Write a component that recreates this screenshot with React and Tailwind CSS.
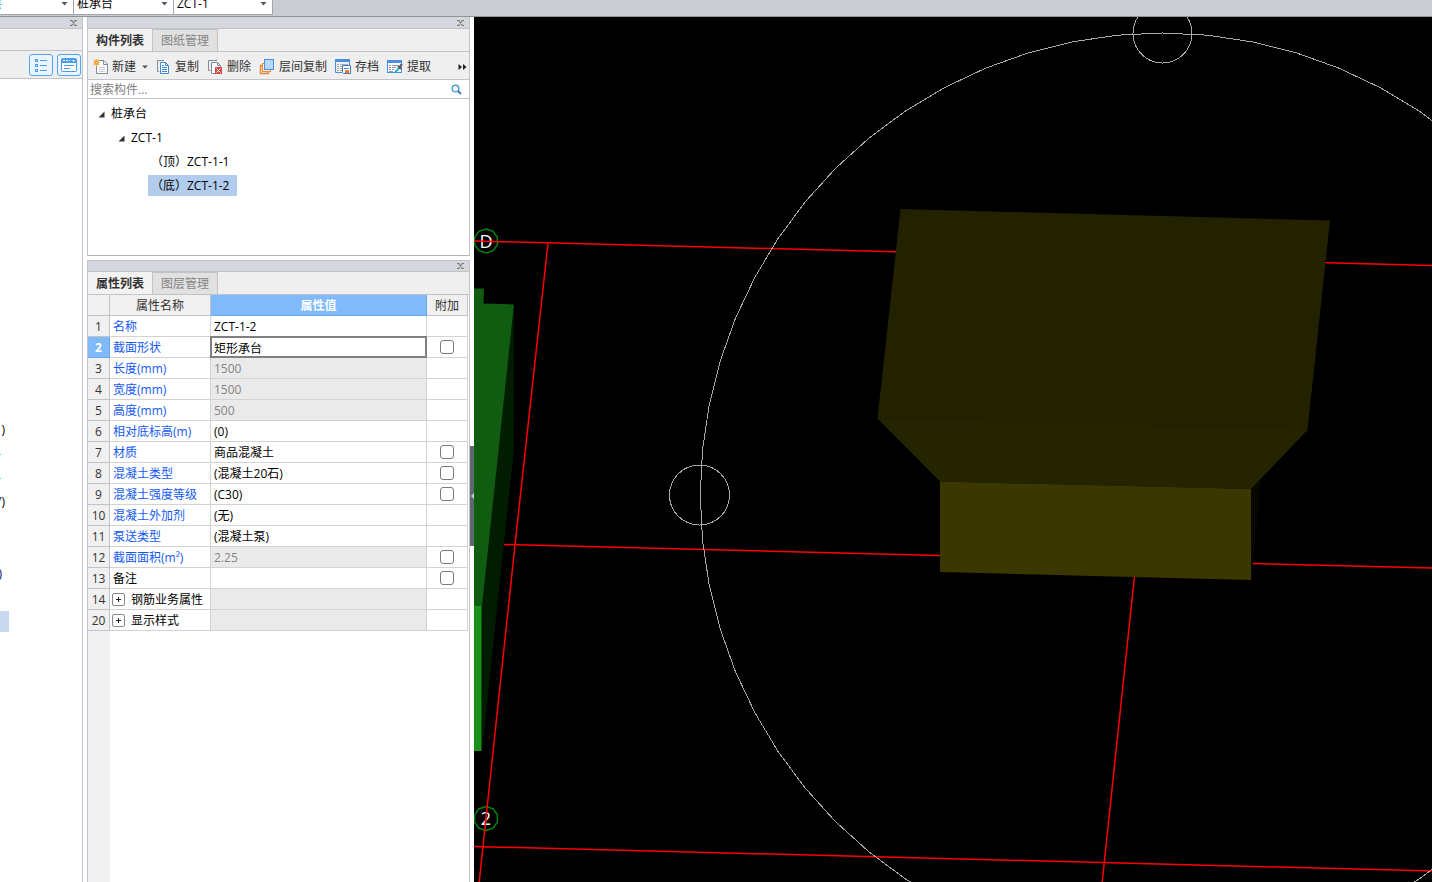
import React from 'react';

const rows = [
  { n: 1, name: '名称', value: 'ZCT-1-2' },
  { n: 2, name: '截面形状', value: '矩形承台', check: true, active: true },
  { n: 3, name: '长度(mm)', value: '1500', locked: true },
  { n: 4, name: '宽度(mm)', value: '1500', locked: true },
  { n: 5, name: '高度(mm)', value: '500', locked: true },
  { n: 6, name: '相对底标高(m)', value: '(0)' },
  { n: 7, name: '材质', value: '商品混凝土', check: true },
  { n: 8, name: '混凝土类型', value: '(混凝土20石)', check: true },
  { n: 9, name: '混凝土强度等级', value: '(C30)', check: true },
  { n: 10, name: '混凝土外加剂', value: '(无)' },
  { n: 11, name: '泵送类型', value: '(混凝土泵)' },
  { n: 12, name: '截面面积(m²)', value: '2.25', check: true, locked: true },
  { n: 13, name: '备注', value: '', check: true, plain: true },
  { n: 14, name: '钢筋业务属性', value: '', locked: true, group: true },
  { n: 20, name: '显示样式', value: '', locked: true, group: true },
];

function Combo({ label, value, width, text }) {
  return (
    <div className={`relative h-[22px] shrink-0 border-b border-[#a3a7ac] bg-white ${width}`}>
      <select aria-label={label} className={`h-full w-full appearance-none bg-transparent outline-none ${text}`}>
        <option>{value}</option>
      </select>
      <svg className="pointer-events-none absolute right-[5px] top-[9px]" width="7" height="4" viewBox="0 0 7 4">
        <path d="M0.5 0H6.5L3.5 3.5Z" fill="#555" />
      </svg>
    </div>
  );
}

function TitleBar({ label, height }) {
  return (
    <div className={`flex shrink-0 items-center justify-end border-b border-[#c0c3c9] bg-[#d5d7dc] pr-[5px] ${height}`}>
      <button aria-label={label}>
        <svg width="7" height="6" viewBox="0 0 7 6" className="block">
          <path d="M0 0.5H2.500M4.500 0.500H7M0 5.500H2.500M4.500 5.500H7M1.500 0.500L5.500 5.500M5.500 0.500L1.500 5.500" fill="none" stroke="#777" strokeWidth="1.100" />
        </svg>
      </button>
    </div>
  );
}

function Tabs({ active, other }) {
  return (
    <div role="tablist" className="flex h-[23px] shrink-0 border-b border-[#c0c3c9] bg-[#efefef]">
      <button role="tab" aria-selected="true" className="w-16 bg-[#f2f2f2] pt-0.5 font-bold text-[#333]">{active}</button>
      <button role="tab" aria-selected="false" className="w-[66px] border-x border-t border-[#c0c3c9] bg-[#e1e1e1] text-[#858585]">{other}</button>
    </div>
  );
}

function NewIcon() {
  return (
    <svg width="16" height="16" viewBox="0 0 16 16">
      <path d="M6 1.500H11L14.500 5V14.500H3.500V7" fill="#fbfbfb" stroke="#7f8c99" />
      <path d="M10.500 2V5.500H14" fill="none" stroke="#7f8c99" />
      <path d="M6 8.500H12M6 10.500H12M6 12.500H12" stroke="#c9ced4" />
      <path d="M1 1L6 6M6 1L1 6M3.500 0.500V6.500M0.500 3.500H6.500" stroke="#f59a28" strokeWidth="1.200" />
      <rect x="3" y="3" width="1" height="1" fill="#fff" />
    </svg>
  );
}

function CopyIcon() {
  return (
    <svg width="16" height="16" viewBox="0 0 16 16">
      <path d="M4 12.500H2.500V1.500H9" fill="none" stroke="#7f8c99" />
      <path d="M5.500 3.500H10.500L13.500 6.500V14.500H5.500Z" fill="#fff" stroke="#3d86d8" />
      <path d="M10.500 4V6.500H13" fill="none" stroke="#3d86d8" />
      <path d="M7 6.500H9M7 8.500H12M7 10.500H12M7 12.500H12" stroke="#3d86d8" />
    </svg>
  );
}

function DeleteIcon() {
  return (
    <svg width="16" height="16" viewBox="0 0 16 16">
      <path d="M3.500 11.500H1.500V1.500H10" fill="none" stroke="#7f8c99" />
      <path d="M8 14.500H4.500V3.500H10.500L13.500 6.500V8" fill="#fff" stroke="#7f8c99" />
      <path d="M10.500 4V6.500H13" fill="none" stroke="#7f8c99" />
      <rect x="8" y="8" width="7" height="7" fill="#d94b4b" />
      <path d="M9.500 9.500L13.500 13.500M13.500 9.500L9.500 13.500" stroke="#fff" />
    </svg>
  );
}

function LayerIcon() {
  return (
    <svg width="16" height="16" viewBox="0 0 16 16">
      <path d="M3 6.500H1.500V14.500H9.500V13" fill="none" stroke="#f08228" strokeWidth="1.400" />
      <path d="M5 4.500H3.500V12.500H11.500V11" fill="none" stroke="#f08228" />
      <rect x="5.500" y="0.500" width="9" height="10" fill="#b7d7fb" stroke="#4a8fe0" />
    </svg>
  );
}

function ArchiveIcon() {
  return (
    <svg width="16" height="16" viewBox="0 0 16 16">
      <path d="M0.500 1V13.500H7M14.500 3V7" fill="none" stroke="#4a8fe0" />
      <rect x="0" y="0" width="15" height="3" fill="#4a8fe0" />
      <path d="M2 5.500H4M5 5.500H13M2 7.500H4M5 7.500H7M2 9.500H4M5 9.500H7M2 11.500H4M5 11.500H7" stroke="#a8aeb5" />
      <path d="M7.500 6.500H15.500V14.500H8.500L7.500 13.500Z" fill="#fff" stroke="#3f78c0" />
      <path d="M9 9.500H14" stroke="#4a8fe0" />
      <rect x="10" y="11" width="4" height="3" fill="#f07a28" />
    </svg>
  );
}

function ExtractIcon() {
  return (
    <svg width="16" height="16" viewBox="0 0 16 16">
      <rect x="0.500" y="1.500" width="14" height="12" fill="#fff" stroke="#4a8fe0" />
      <rect x="0" y="1" width="15" height="3" fill="#4a8fe0" />
      <path d="M2 6.500H4M5 6.500H11M2 8.500H4M5 8.500H9M2 10.500H4M5 10.500H7M2 12.500H6" stroke="#8f969e" />
      <path d="M8 13.500L12.500 8.500" stroke="#28b4d2" strokeWidth="2" />
      <path d="M11 7L14 10M12 8.500L15 5" stroke="#5c5c5c" strokeWidth="2" />
    </svg>
  );
}

function Tool({ icon, children }) {
  return (
    <button className="flex shrink-0 items-center gap-1 whitespace-nowrap">
      {icon}
      {children}
    </button>
  );
}

function TreeArrow() {
  return (
    <svg width="7" height="7" viewBox="0 0 7 7">
      <path d="M6.500 0.500V6.500H0.500Z" fill="#333" />
    </svg>
  );
}

function LeftPanel() {
  return (
    <aside className="flex w-[83px] shrink-0 flex-col border-r border-[#c0c3c9]">
      <TitleBar label="关闭导航" height="h-3 pt-px" />
      <div className="h-[22px] shrink-0 border-b border-[#c0c3c9] bg-[#efefef]" />
      <div className="flex h-7 shrink-0 items-center justify-end gap-1 border-b border-[#c0c3c9] bg-[#efefef] pr-px">
        <button aria-label="列表视图" className="flex h-[22px] w-6 items-center justify-center rounded-[3px] border border-[#55a2ee] bg-[#eaf4fd]">
          <svg width="14" height="14" viewBox="0 0 14 14" fill="none" stroke="#4b9be8">
            <rect x="1.500" y="1.500" width="2" height="2" />
            <rect x="1.500" y="6.500" width="2" height="2" />
            <rect x="1.500" y="11.500" width="2" height="2" />
            <path d="M6 2.500H13M6 7.500H13M6 12.500H13" />
          </svg>
        </button>
        <button aria-label="窗口视图" className="flex h-[22px] w-6 items-center justify-center rounded-[3px] border border-[#55a2ee] bg-[#eaf4fd]">
          <svg width="16" height="14" viewBox="0 0 16 14">
            <rect x="0.500" y="0.500" width="15" height="13" rx="1" fill="#fff" stroke="#4b9be8" />
            <rect x="1" y="1" width="14" height="4" fill="#4b9be8" />
            <path d="M2 2.500H4M5 2.500H7M8 2.500H9" stroke="#fff" />
            <path d="M11 2H14L12.500 4Z" fill="#fff" />
            <path d="M3 7.500H13M3 10.500H9" stroke="#4b9be8" />
          </svg>
        </button>
      </div>
      <ul className="flex-1 overflow-hidden pt-[339px] leading-6 text-black">
        <li className="flex h-6 w-[5px] justify-end overflow-hidden">)</li>
        <li className="flex h-6 w-px justify-end overflow-hidden text-cyan-400">-</li>
        <li className="flex h-6 w-px justify-end overflow-hidden text-cyan-400">-</li>
        <li className="flex h-6 w-[5px] justify-end overflow-hidden">/)</li>
        <li className="h-6" />
        <li className="h-6" />
        <li className="flex h-6 w-0.5 justify-end overflow-hidden text-[#000080]">)</li>
        <li className="h-6" />
        <li className="h-6 pt-px"><span className="block h-[21px] w-[9px] bg-[#c8d8ef]" /></li>
      </ul>
    </aside>
  );
}

function ComponentPanel() {
  return (
    <section className="flex flex-col border-x border-[#c0c3c9]">
      <TitleBar label="关闭构件列表" height="h-3 pt-px" />
      <Tabs active="构件列表" other="图纸管理" />
      <div className="flex h-7 shrink-0 items-center border-b border-[#c0c3c9] bg-[#efefef] pl-[5px] pr-0.5 pt-0.5 text-[#333]">
        <div className="flex flex-1 items-center gap-[7px]">
          <button className="flex items-center gap-[3px] whitespace-nowrap">
            <NewIcon />
            新建
            <svg width="9" height="4" viewBox="0 0 9 4">
              <path d="M3 0.500H9L6 3.500Z" fill="#555" />
            </svg>
          </button>
          <div className="flex items-center gap-2">
            <Tool icon={<CopyIcon />}>复制</Tool>
            <Tool icon={<DeleteIcon />}>删除</Tool>
            <Tool icon={<LayerIcon />}>层间复制</Tool>
            <Tool icon={<ArchiveIcon />}>存档</Tool>
            <Tool icon={<ExtractIcon />}>提取</Tool>
          </div>
        </div>
        <button aria-label="更多">
          <svg width="9" height="6" viewBox="0 0 9 6" className="block">
            <path d="M0.500 0L4 3L0.500 6ZM5 0L8.500 3L5 6Z" fill="#222" />
          </svg>
        </button>
      </div>
      <div className="flex h-[19px] shrink-0 items-center border-b border-[#c0c3c9] bg-white pr-[7px]">
        <input aria-label="搜索构件" placeholder="搜索构件..." className="h-full min-w-0 flex-1 px-0.5 outline-none placeholder:text-[#808080]" />
        <button aria-label="搜索">
          <svg width="11" height="11" viewBox="0 0 11 11" fill="none" className="block">
            <circle cx="4.500" cy="4.500" r="3.300" stroke="#4c9fd0" strokeWidth="1.500" />
            <path d="M7 7L10 10" stroke="#2f83b8" strokeWidth="2" />
          </svg>
        </button>
      </div>
      <ul role="tree" className="h-[157px] border-b border-[#b0b3b8] bg-white pt-[3px] text-black">
        <li role="treeitem" className="flex h-6 items-center gap-1.5 pl-[10px]"><TreeArrow />桩承台</li>
        <li role="treeitem" className="flex h-6 items-center gap-1.5 pl-[30px]"><TreeArrow />ZCT-1</li>
        <li role="treeitem" className="flex h-6 items-start pl-[60px] pt-px"><span className="pl-[3px] pr-2 leading-[21px]">（顶）ZCT-1-1</span></li>
        <li role="treeitem" aria-selected="true" className="flex h-6 items-start pl-[60px] pt-px"><span className="bg-[#b1ccec] pl-[3px] pr-2 leading-[21px]">（底）ZCT-1-2</span></li>
      </ul>
    </section>
  );
}

function PropertyRow({ row }) {
  const nameColor = row.plain || row.group ? 'text-black' : 'text-[#1459f5]';
  const valueColor = row.locked ? 'bg-[#eaeaea] text-[#858585]' : 'text-black';
  return (
    <tr className="h-[21px]">
      <th scope="row" className={`border-b border-r p-0 pt-0.5 text-center ${row.active ? 'border-[#66a9ee] bg-[#80bafb] font-bold text-white' : 'border-[#c0c3c9] bg-[#f0f0f0] font-normal text-[#333]'}`}>{row.n}</th>
      <td className={`whitespace-nowrap border-b border-r border-[#d3d3d3] p-0 ${nameColor}`}>
        {row.group ? (
          <div className="flex h-5 items-center gap-1.5 pl-0.5">
            <button aria-label={`展开${row.name}`} className="flex h-[13px] w-[13px] items-center justify-center rounded-[2px] border border-[#888]">
              <svg width="5" height="5" viewBox="0 0 5 5"><path d="M0 2.500H5M2.500 0V5" stroke="#222" /></svg>
            </button>
            <span className="pt-0.5">{row.name}</span>
          </div>
        ) : (
          <div className="pl-[3px] pt-0.5">{row.name}</div>
        )}
      </td>
      <td className={`border-b border-r border-[#d3d3d3] p-0 ${valueColor}`}>
        {row.active ? (
          <input aria-label={row.name} defaultValue={row.value} className="block h-5 w-full bg-white px-[3px] pt-0.5 outline-2 -outline-offset-1 outline-[#808080]" />
        ) : (
          <div className="pl-[3px] pt-0.5">{row.value}</div>
        )}
      </td>
      <td className="border-b border-r border-[#d3d3d3] p-0">
        {row.check && (
          <input type="checkbox" aria-label={`附加${row.name}`} className="mx-auto block h-[14px] w-[14px] appearance-none rounded-[3px] border border-[#7a7a7a] bg-white checked:bg-[#80bafb]" />
        )}
      </td>
    </tr>
  );
}

function PropertyPanel() {
  return (
    <section className="flex min-h-0 flex-1 flex-col border-x border-t border-[#c0c3c9]">
      <TitleBar label="关闭属性列表" height="h-[11px]" />
      <Tabs active="属性列表" other="图层管理" />
      <div className="flex flex-1 flex-col pr-px">
        <table className="w-full table-fixed border-separate border-spacing-0 leading-[18px]">
          <colgroup>
            <col className="w-[22px]" />
            <col className="w-[101px]" />
            <col />
            <col className="w-[41px]" />
          </colgroup>
          <thead>
            <tr className="h-[21px] text-[#333]">
              <th aria-label="序号" className="border-b border-r border-[#c0c3c9] bg-[#f0f0f0] p-0" />
              <th className="border-b border-r border-[#c0c3c9] bg-[#f0f0f0] p-0 pt-0.5 font-normal">属性名称</th>
              <th className="border-b border-r border-[#66a9ee] bg-[#80bafb] p-0 pt-0.5 font-bold text-white">属性值</th>
              <th className="border-b border-r border-[#c0c3c9] bg-[#f0f0f0] p-0 pt-0.5 font-normal">附加</th>
            </tr>
          </thead>
          <tbody>
            {rows.map((row) => (
              <PropertyRow key={row.n} row={row} />
            ))}
          </tbody>
        </table>
        <div className="w-[22px] flex-1 bg-[#f0f0f0]" />
      </div>
    </section>
  );
}

const orbit = Array.from({ length: 64 }, (_, i) => {
  const a = (i * Math.PI) / 32;
  return `${(1162.3 + 462 * Math.cos(a)).toFixed(1)},${(495 + 462 * Math.sin(a)).toFixed(1)}`;
}).join(' ');

function axisRing(cx, cy) {
  return Array.from({ length: 10 }, (_, i) => {
    const a = (i * Math.PI) / 5 - Math.PI / 2;
    return `${(cx + 12 * Math.cos(a)).toFixed(1)},${(cy + 12 * Math.sin(a)).toFixed(1)}`;
  }).join(' ');
}

function Viewport() {
  return (
    <main className="min-w-0 flex-1 overflow-hidden bg-black">
      <svg className="block h-full w-full" role="img" aria-label="三维视图">
        <g transform="translate(-474 -17)">
          <polygon points="514,304 514,448 482,751 481,606" fill="#021c02" />
          <polygon points="474,288.500 484,288.500 483.500,303.500 514,304.500 482,606 474,606" fill="#105c10" />
          <rect x="474" y="606" width="7.500" height="145" fill="#1a921a" />
          <g fill="none" stroke="#088808" strokeWidth="1.400">
            <polygon points={axisRing(486, 241)} />
            <polygon points={axisRing(486, 818.5)} />
          </g>
          <g fill="#fff" fontSize="18" textAnchor="middle">
            <text x="486" y="247.500">D</text>
            <text x="486" y="825">2</text>
          </g>
          <g stroke="#ff0000" strokeWidth="1.500">
            <path d="M474 241L1440 265.700M548 243L515 545L479 884M504 544.500L1440 568.200M474 846.500L1440 871.200M1134.500 576L1102 884" fill="none" />
          </g>
          <polygon points="1251,489 1261,480 1252.500,566 1251,580" fill="#080800" />
          <polygon points="877.500,418.500 940,400 1250,400 1307.500,430 1251,489 940,481.500" fill="#252400" />
          <polygon points="900.500,209 1330,220.500 1307.500,430 877.500,418.500" fill="#222200" />
          <polygon points="940,481.500 1251,489 1251,580 940,572" fill="#3a3700" />
          <g fill="none" stroke="#a8a8a8" shapeRendering="crispEdges">
            <polygon points={orbit} />
            <circle cx="1162.500" cy="33.500" r="29.500" />
            <circle cx="699.500" cy="495" r="30" />
          </g>
        </g>
      </svg>
    </main>
  );
}

export default function App() {
  return (
    <div className="flex h-screen flex-col overflow-hidden bg-white font-['Open_Sans','Noto_Sans_CJK_SC',sans-serif] text-xs">
      <header className="flex h-[17px] shrink-0 items-end overflow-hidden border-b border-[#8f949a] bg-[#c9cdd2] pb-px">
        <div className="flex gap-px bg-[#a3a7ac] pr-px">
          <Combo label="楼层" value="层" width="w-[73px]" text="-indent-[10px] text-[#3c9be8]" />
          <Combo label="构件类型" value="桩承台" width="w-[99px]" text="pl-[3px] text-black" />
          <Combo label="构件" value="ZCT-1" width="w-[98px]" text="pl-[3px] text-black" />
        </div>
      </header>
      <div className="flex min-h-0 flex-1">
        <LeftPanel />
        <div className="ml-1 flex w-[383px] shrink-0 flex-col gap-1">
          <ComponentPanel />
          <PropertyPanel />
        </div>
        <div className="w-1 shrink-0 pt-[429px]">
          <button aria-label="折叠面板" className="flex h-[100px] w-full items-center justify-end bg-[#5f6872]">
            <svg width="3" height="6" viewBox="0 0 3 6"><path d="M3 0V6L0 3Z" fill="#c9cdd2" /></svg>
          </button>
        </div>
        <Viewport />
      </div>
    </div>
  );
}
